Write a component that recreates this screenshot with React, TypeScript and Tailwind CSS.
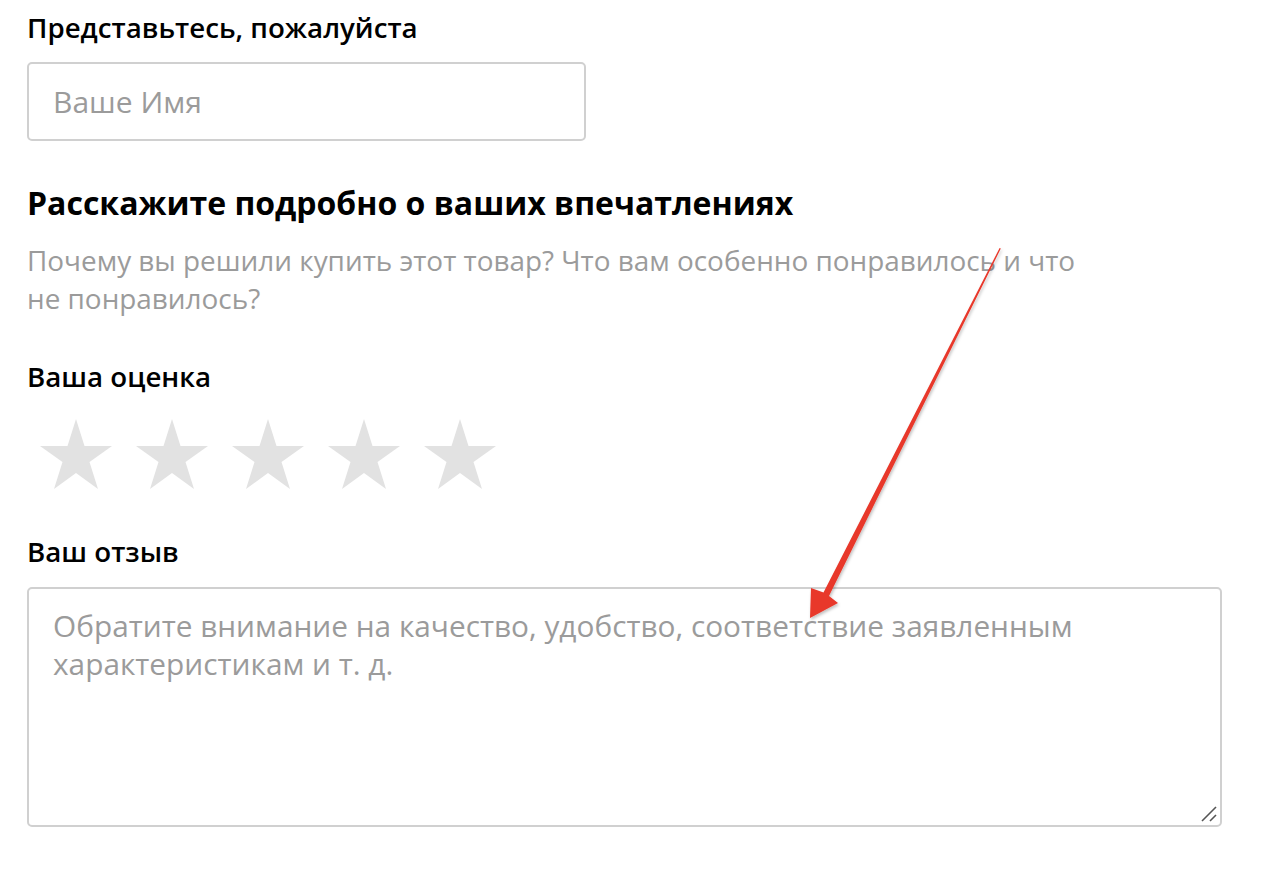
import React from "react";

function Star() {
  return (
    <svg width="74" height="72" viewBox="0 0 74 72" className="block">
      <polygon
        points="37,1 45.5,28 73,28 50.5,44 59,71 37,55 15,71 23.5,44 1,28 28.5,28"
        fill="#e2e2e2"
      />
    </svg>
  );
}

export default function App() {
  return (
    <div
      className="relative w-[1264px] h-[879px] bg-white overflow-hidden"
      style={{ fontFamily: '"Open Sans", "Noto Sans", sans-serif' }}
    >
      <div className="pl-[27px] pt-[8px] flex flex-col">
        <div className="text-[27.7px] leading-[38px] font-semibold text-black">
          Представьтесь, пожалуйста
        </div>
        <div className="mt-[16px] w-[559px] h-[79px] border-2 border-[#d0d0d0] rounded-[5px] flex items-center pl-[24px] text-[30px] text-[#9b9b9b]">
          Ваше Имя
        </div>
        <div className="mt-[42px] text-[32px] leading-[40px] font-bold text-black">
          Расскажите подробно о ваших впечатлениях
        </div>
        <div className="mt-[18px] w-[1060px] text-[27.9px] leading-[38px] text-[#9b9b9b]">
          Почему вы решили купить этот товар? Что вам особенно понравилось и что
          <br />
          не понравилось?
        </div>
        <div className="mt-[40px] text-[27.7px] leading-[38px] font-semibold text-black">
          Ваша оценка
        </div>
        <div className="mt-[23px] ml-[12px] flex gap-[22px]">
          <Star />
          <Star />
          <Star />
          <Star />
          <Star />
        </div>
        <div className="mt-[42px] text-[27.7px] leading-[38px] font-semibold text-black">
          Ваш отзыв
        </div>
        <div className="relative mt-[17px] w-[1195px] h-[240px] border-2 border-[#d0d0d0] rounded-[5px] pl-[24px] pt-[18px] text-[29.8px] leading-[38px] text-[#9b9b9b]">
          Обратите внимание на качество, удобство, соответствие заявленным
          <br />
          характеристикам и т. д.
          <svg
            className="absolute right-[2px] bottom-[2px]"
            width="18"
            height="18"
            viewBox="0 0 18 18"
          >
            <line x1="2" y1="16" x2="16" y2="2" stroke="#555" strokeWidth="1.6" />
            <line x1="10" y1="16" x2="16" y2="10" stroke="#555" strokeWidth="1.6" />
          </svg>
        </div>
      </div>
      <svg
        className="absolute left-0 top-0 pointer-events-none"
        width="1264"
        height="879"
      >
        <defs>
          <filter id="sh" x="-20%" y="-20%" width="140%" height="140%">
            <feDropShadow dx="1" dy="2" stdDeviation="1.5" floodColor="#000" floodOpacity="0.25" />
          </filter>
        </defs>
        <polygon
          points="1000.8,248.5 829,596 838,603 810,618 811,588 823.5,592.5 999.6,248"
          fill="#e8372a"
          filter="url(#sh)"
        />
      </svg>
    </div>
  );
}
